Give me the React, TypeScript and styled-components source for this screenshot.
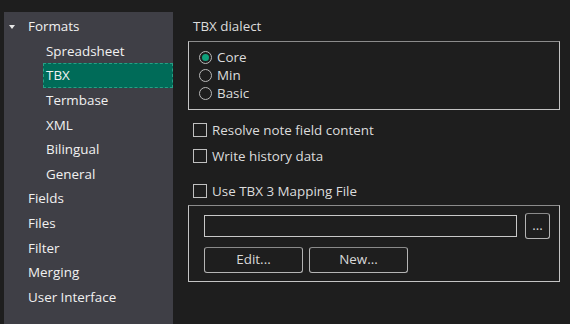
import React from 'react';
import styled, { createGlobalStyle } from 'styled-components';

const Global = createGlobalStyle`
  html, body {
    margin: 0;
    padding: 0;
    background: #1e1e1e;
  }
  body {
    font-family: 'Open Sans', 'Noto Sans', sans-serif;
    font-size: 13.4px;
  }
`

const Page = styled.div`
  display: flex;
  width: 570px;
  height: 324px;
  padding: 12px 0 0 4px;
  box-sizing: border-box;
  overflow: hidden;
`

const Sidebar = styled.div`
  width: 169px;
  flex-shrink: 0;
  background: #3f3f46;
  padding-top: 2px;
  box-sizing: border-box;
`

const TreeRow = styled.div<{ $level: number; $selected?: boolean }>`
  display: flex;
  align-items: center;
  height: 24.6px;
  box-sizing: border-box;
  color: #f1f1f1;
  padding-left: ${p => (p.$level === 0 ? 23 : 2)}px;
  margin-left: ${p => (p.$level === 0 ? 0 : 39)}px;
  background: ${p => (p.$selected ? '#006b58' : 'transparent')};
  border: 1px dashed ${p => (p.$selected ? '#25a085' : 'transparent')};
  position: relative;
`

const Arrow = styled.span`
  position: absolute;
  left: 4px;
  top: 50%;
  margin-top: -1px;
  width: 0;
  height: 0;
  border-left: 3.5px solid transparent;
  border-right: 3.5px solid transparent;
  border-top: 4px solid #e8e8e8;
`

const Content = styled.div`
  flex: 1;
  padding: 5px 10px 0 15px;
  color: #dcdcdc;
`

const Caption = styled.div`
  padding-left: 5px;
  height: 18px;
  line-height: 18px;
  margin-bottom: 6px;
`

const Group = styled.div<{ $pad: string }>`
  border: 1px solid #c4c4c4;
  border-top-color: #8c8c8c;
  padding: ${p => p.$pad};
`

const RadioRow = styled.label`
  display: flex;
  align-items: center;
  height: 18px;
  gap: 5px;
`

const RadioDot = styled.span<{ $on?: boolean }>`
  width: 11px;
  height: 11px;
  border: 1px solid #b8b8b8;
  border-radius: 50%;
  display: flex;
  align-items: center;
  justify-content: center;
  &::after {
    content: '';
    display: ${p => (p.$on ? 'block' : 'none')};
    width: 7px;
    height: 7px;
    border-radius: 50%;
    background: #0fa07c;
  }
`

const CheckRow = styled.label<{ $top: number }>`
  display: flex;
  align-items: center;
  gap: 5px;
  height: 18px;
  margin-top: ${p => p.$top}px;
  padding-left: 5px;
`

const Box = styled.span`
  width: 14px;
  height: 14px;
  border: 1px solid #c0c0c0;
  box-sizing: border-box;
  flex-shrink: 0;
`

const FileRow = styled.div`
  display: flex;
  align-items: center;
  gap: 8px;
`

const TextInput = styled.div`
  width: 313px;
  height: 22px;
  box-sizing: border-box;
  border: 1px solid #c8c8c8;
`

const Button = styled.button<{ $w: number }>`
  width: ${p => p.$w}px;
  height: 26px;
  background: transparent;
  border: 1px solid #b4b4b4;
  border-top-color: #8a8a8a;
  border-radius: 3px;
  color: #d8d8d8;
  font-family: inherit;
  font-size: 13.4px;
  padding: 0;
  line-height: 1;
`

const ButtonRow = styled.div`
  display: flex;
  gap: 6px;
  margin-top: 8px;
`

type Item = { label: string; level: number; selected?: boolean; open?: boolean }

const tree: Item[] = [
  { label: 'Formats', level: 0, open: true },
  { label: 'Spreadsheet', level: 1 },
  { label: 'TBX', level: 1, selected: true },
  { label: 'Termbase', level: 1 },
  { label: 'XML', level: 1 },
  { label: 'Bilingual', level: 1 },
  { label: 'General', level: 1 },
  { label: 'Fields', level: 0 },
  { label: 'Files', level: 0 },
  { label: 'Filter', level: 0 },
  { label: 'Merging', level: 0 },
  { label: 'User Interface', level: 0 },
]

export default function App() {
  return (
    <>
      <Global />
      <Page>
        <Sidebar>
          {tree.map(item => (
            <TreeRow key={item.label} $level={item.level} $selected={item.selected}>
              {item.open && <Arrow />}
              {item.label}
            </TreeRow>
          ))}
        </Sidebar>
        <Content>
          <Caption>TBX dialect</Caption>
          <Group $pad="6px 10px 7px 10px">
            <RadioRow><RadioDot $on />Core</RadioRow>
            <RadioRow><RadioDot />Min</RadioRow>
            <RadioRow><RadioDot />Basic</RadioRow>
          </Group>
          <CheckRow $top={11}><Box />Resolve note field content</CheckRow>
          <CheckRow $top={8}><Box />Write history data</CheckRow>
          <CheckRow $top={17}><Box />Use TBX 3 Mapping File</CheckRow>
          <Group $pad="7px 8px 8px 15px" style={{ marginTop: 5 }}>
            <FileRow>
              <TextInput />
              <Button $w={25}>...</Button>
            </FileRow>
            <ButtonRow>
              <Button $w={99}>Edit...</Button>
              <Button $w={99}>New...</Button>
            </ButtonRow>
          </Group>
        </Content>
      </Page>
    </>
  );
}
